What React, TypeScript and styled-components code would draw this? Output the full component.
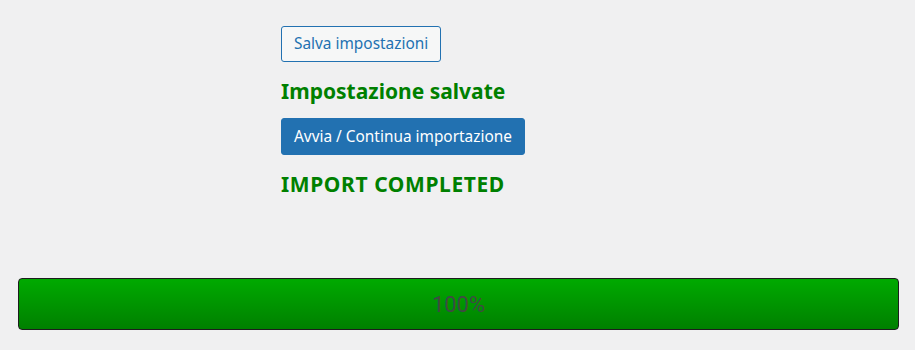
import styled, { createGlobalStyle } from "styled-components";

const GlobalStyle = createGlobalStyle`
  html, body {
    margin: 0;
    padding: 0;
    background: #f0f0f1;
    font-family: "Noto Sans", "Open Sans", sans-serif;
  }
`;

const Page = styled.div`
  padding: 26px 16px 0 18px;
`;

const Settings = styled.div`
  padding-left: 263px;
  display: flex;
  flex-direction: column;
  align-items: flex-start;
`;

const Button = styled.button<{ $primary?: boolean }>`
  font-family: inherit;
  font-size: 15.4px;
  line-height: 20px;
  height: ${(p) => (p.$primary ? "37px" : "36px")};
  padding: 0 12px;
  border-radius: 3px;
  border: 1px solid #2271b1;
  background: ${(p) => (p.$primary ? "#2271b1" : "#f6f7f7")};
  color: ${(p) => (p.$primary ? "#ffffff" : "#2271b1")};
  cursor: pointer;
`;

const Notice = styled.h3<{ $caps?: boolean }>`
  margin: 16px 0 14px;
  font-size: 21px;
  line-height: 26px;
  font-weight: 700;
  letter-spacing: ${(p) => (p.$caps ? "0.6px" : "0")};
  color: #008000;
`;

const Progress = styled.div`
  margin-top: 67px;
  height: 50px;
  border: 1px solid #1d1d1d;
  border-radius: 4px;
  background: linear-gradient(to bottom, #00aa00, #008000);
  display: flex;
  align-items: center;
  justify-content: center;
  font-family: "Roboto", sans-serif;
  font-size: 22px;
  color: #3f4a44;
`;

export default function App() {
  return (
    <>
      <GlobalStyle />
      <Page>
        <Settings>
          <Button>Salva impostazioni</Button>
          <Notice>Impostazione salvate</Notice>
          <Button $primary>Avvia / Continua importazione</Button>
          <Notice $caps>IMPORT COMPLETED</Notice>
        </Settings>
        <Progress>100%</Progress>
      </Page>
    </>
  );
}
